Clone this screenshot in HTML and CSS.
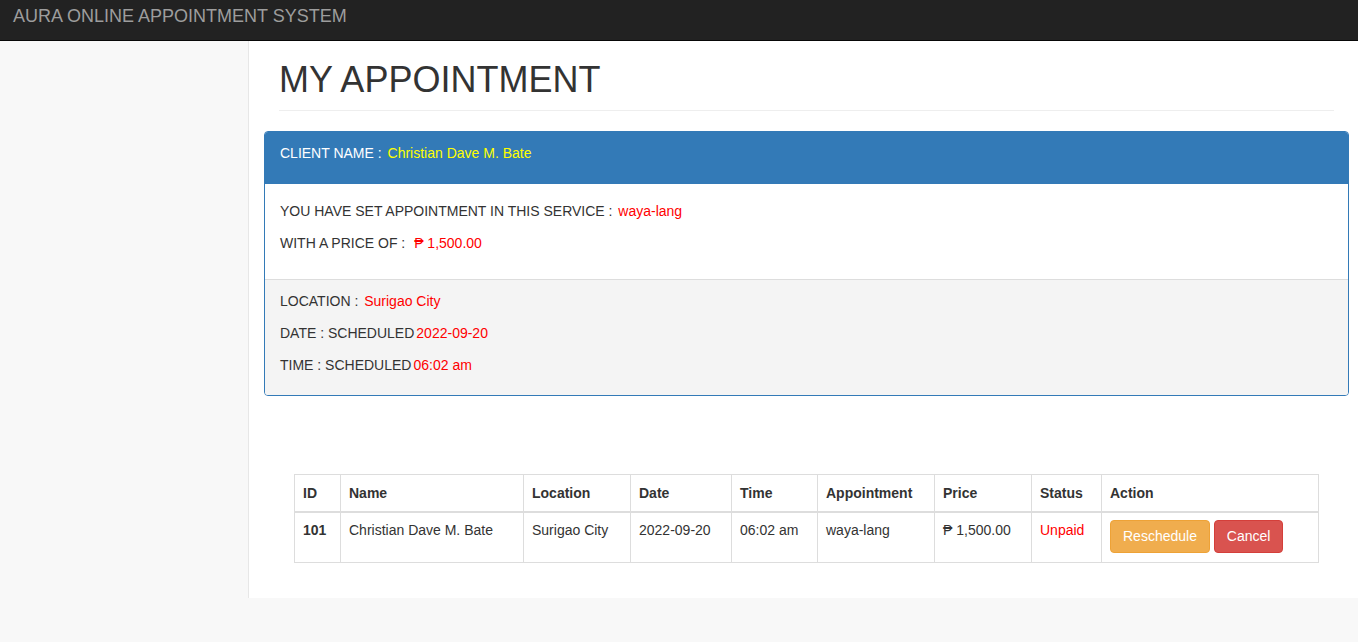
FILE: index.html
```html
<!DOCTYPE html>
<html>
<head>
<meta charset="utf-8">
<title>My Appointment</title>
<link rel="stylesheet" href="styles.css">
</head>
<body>
<nav class="navbar">
  <span class="brand">AURA ONLINE APPOINTMENT SYSTEM</span>
</nav>
<div class="wrapper">
  <aside class="sidebar"></aside>
  <main class="page-wrapper">
    <div class="page-header">
      <h1>MY APPOINTMENT</h1>
    </div>
    <div class="panel">
      <div class="panel-heading">CLIENT NAME : <span class="yellow">Christian Dave M. Bate</span></div>
      <div class="panel-body">
        <p>YOU HAVE SET APPOINTMENT IN THIS SERVICE : <span class="red gap">waya-lang</span></p>
        <p>WITH A PRICE OF : <span class="red price">₱ 1,500.00</span></p>
      </div>
      <div class="panel-footer">
        <p>LOCATION : <span class="red gap">Surigao City</span></p>
        <p>DATE : SCHEDULED<span class="red tight">2022-09-20</span></p>
        <p>TIME : SCHEDULED<span class="red tight">06:02 am</span></p>
      </div>
    </div>
    <div class="table-wrap">
      <table class="table">
        <colgroup>
          <col class="c-id"><col class="c-name"><col class="c-loc"><col class="c-date"><col class="c-time"><col class="c-appt"><col class="c-price"><col class="c-status"><col class="c-action">
        </colgroup>
        <thead>
          <tr><th>ID</th><th>Name</th><th>Location</th><th>Date</th><th>Time</th><th>Appointment</th><th>Price</th><th>Status</th><th>Action</th></tr>
        </thead>
        <tbody>
          <tr>
            <td class="bold">101</td>
            <td>Christian Dave M. Bate</td>
            <td>Surigao City</td>
            <td>2022-09-20</td>
            <td>06:02 am</td>
            <td>waya-lang</td>
            <td>₱ 1,500.00</td>
            <td class="red">Unpaid</td>
            <td><button class="btn btn-warning">Reschedule</button> <button class="btn btn-danger">Cancel</button></td>
          </tr>
        </tbody>
      </table>
    </div>
  </main>
</div>
</body>
</html>
```
FILE: styles.css
```css
* { box-sizing: border-box; }
html, body {
  margin: 0;
  padding: 0;
}
body {
  background: #f8f8f8;
  font-family: "Liberation Sans", Arial, "DejaVu Sans", sans-serif;
  font-size: 14px;
  line-height: 20px;
  color: #333;
}
.navbar {
  height: 41px;
  background: #222;
  border-bottom: 1px solid #080808;
  padding: 6px 13px;
}
.brand {
  font-size: 18px;
  line-height: 20px;
  color: #9d9d9d;
}
.wrapper {
  display: flex;
}
.sidebar {
  width: 248px;
  flex: none;
}
.page-wrapper {
  flex: 1;
  background: #fff;
  border-left: 1px solid #e7e7e7;
  padding: 0 9px 35px 15px;
  min-width: 0;
}
.page-header {
  margin: 19px 15px 20px;
  padding-bottom: 10px;
  border-bottom: 1px solid #eee;
}
.page-header h1 {
  margin: 0;
  font-size: 36px;
  font-weight: 500;
  line-height: 39.6px;
  color: #333;
}
.panel {
  border: 1px solid #337ab7;
  border-radius: 4px;
  overflow: hidden;
}
.panel-heading {
  background: #337ab7;
  color: #fff;
  padding: 11px 15px 21px;
}
.yellow { color: #ffff00; margin-left: 2px; }
.red { color: #ff0000; }
.gap { margin-left: 2px; }
.price { margin-left: 5px; }
.tight { margin-left: 2px; }
.panel p { margin: 0 0 12px; }
.panel-body {
  padding: 17px 15px 14px;
  background: #fff;
}
.panel-footer {
  background: #f4f4f4;
  border-top: 1px solid #ddd;
  padding: 11px 15px 8px;
}
.table-wrap {
  padding: 78px 30px 0;
}
.table {
  width: 100%;
  border-collapse: collapse;
  table-layout: fixed;
  border: 1px solid #ddd;
}
.table th, .table td {
  border: 1px solid #ddd;
  padding: 8px;
  text-align: left;
  vertical-align: top;
  line-height: 20px;
  white-space: nowrap;
}
.table td { padding: 7px 8px 9px; }
.table th { font-weight: bold; border-bottom: 2px solid #ddd; }
.table td.red { color: #ff0000; }
.bold { font-weight: bold; }
.c-id { width: 46px; }
.c-name { width: 183px; }
.c-loc { width: 107px; }
.c-date { width: 101px; }
.c-time { width: 86px; }
.c-appt { width: 117px; }
.c-price { width: 97px; }
.c-status { width: 70px; }
.c-action { width: 217px; }
.btn {
  font-family: inherit;
  font-size: 14px;
  line-height: 19px;
  padding: 6px 12px;
  border: 1px solid transparent;
  border-radius: 4px;
  color: #fff;
  cursor: pointer;
}
.btn-warning { background: #f0ad4e; border-color: #eea236; }
.btn-danger { background: #d9534f; border-color: #d43f3a; }
```
